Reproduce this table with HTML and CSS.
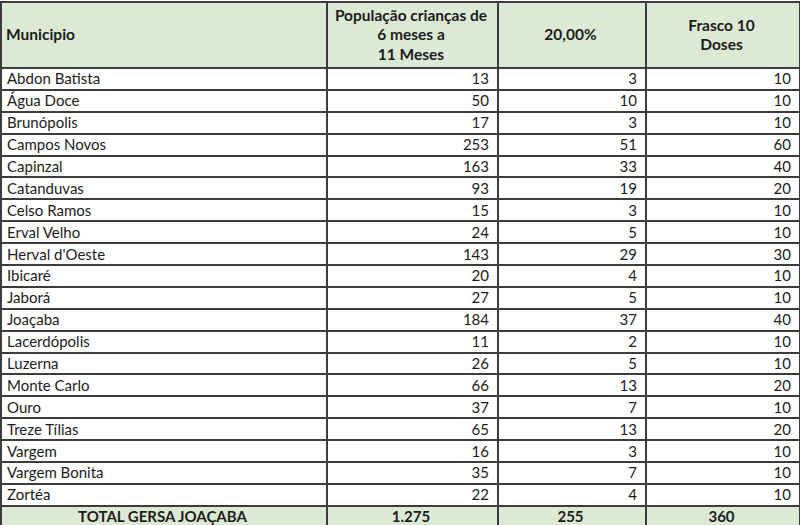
FILE: index.html
```html
<!DOCTYPE html>
<html lang="pt">
<head>
<meta charset="utf-8">
<title>Municipios</title>
<link rel="stylesheet" href="styles.css">
</head>
<body>
<table class="grid">
  <colgroup>
    <col class="c1"><col class="c2"><col class="c3"><col class="c4">
  </colgroup>
  <thead>
    <tr class="head">
      <th class="left">Municipio</th>
      <th>População crianças de<br>6 meses a<br>11 Meses</th>
      <th>20,00%</th>
      <th>Frasco 10<br>Doses</th>
    </tr>
  </thead>
  <tbody>
    <tr><td class="name">Abdon Batista</td><td>13</td><td>3</td><td>10</td></tr>
    <tr><td class="name">Água Doce</td><td>50</td><td>10</td><td>10</td></tr>
    <tr><td class="name">Brunópolis</td><td>17</td><td>3</td><td>10</td></tr>
    <tr><td class="name">Campos Novos</td><td>253</td><td>51</td><td>60</td></tr>
    <tr><td class="name">Capinzal</td><td>163</td><td>33</td><td>40</td></tr>
    <tr><td class="name">Catanduvas</td><td>93</td><td>19</td><td>20</td></tr>
    <tr><td class="name">Celso Ramos</td><td>15</td><td>3</td><td>10</td></tr>
    <tr><td class="name">Erval Velho</td><td>24</td><td>5</td><td>10</td></tr>
    <tr><td class="name">Herval d'Oeste</td><td>143</td><td>29</td><td>30</td></tr>
    <tr><td class="name">Ibicaré</td><td>20</td><td>4</td><td>10</td></tr>
    <tr><td class="name">Jaborá</td><td>27</td><td>5</td><td>10</td></tr>
    <tr><td class="name">Joaçaba</td><td>184</td><td>37</td><td>40</td></tr>
    <tr><td class="name">Lacerdópolis</td><td>11</td><td>2</td><td>10</td></tr>
    <tr><td class="name">Luzerna</td><td>26</td><td>5</td><td>10</td></tr>
    <tr><td class="name">Monte Carlo</td><td>66</td><td>13</td><td>20</td></tr>
    <tr><td class="name">Ouro</td><td>37</td><td>7</td><td>10</td></tr>
    <tr><td class="name">Treze Tílias</td><td>65</td><td>13</td><td>20</td></tr>
    <tr><td class="name">Vargem</td><td>16</td><td>3</td><td>10</td></tr>
    <tr><td class="name">Vargem Bonita</td><td>35</td><td>7</td><td>10</td></tr>
    <tr><td class="name">Zortéa</td><td>22</td><td>4</td><td>10</td></tr>
  </tbody>
  <tfoot>
    <tr class="total">
      <td>TOTAL GERSA JOAÇABA</td><td>1.275</td><td>255</td><td>360</td>
    </tr>
  </tfoot>
</table>
</body>
</html>
```

FILE: styles.css
```css
html, body {
  margin: 0;
  padding: 0;
  background: #ffffff;
}

body {
  padding-top: 1px;
  font-family: Lato, "Open Sans", sans-serif;
  color: #1c1c1c;
  overflow: hidden;
}

.grid {
  border-collapse: collapse;
  table-layout: fixed;
  width: 799px;
  font-size: 15px;
}

.c1 { width: 326px; }
.c2 { width: 171px; }
.c3 { width: 148px; }
.c4 { width: 154px; }

.grid th,
.grid td {
  border: 2px solid #3c3c3c;
  padding: 0 8px 0 5px;
  white-space: nowrap;
  overflow: hidden;
}

.head {
  height: 66px;
  background: #dcead5;
}

.head th {
  font-weight: 700;
  font-size: 15.5px;
  line-height: 19.5px;
  text-align: center;
  vertical-align: middle;
}

.head th.left {
  text-align: left;
  padding-left: 4px;
}

tbody tr {
  height: 21.9px;
}

tbody td {
  line-height: 17px;
  text-align: right;
  padding-right: 8px;
}

tbody td.name {
  text-align: left;
  padding-left: 5px;
}

.total {
  height: 22px;
  background: #dcead5;
}

.total td {
  font-weight: 700;
  text-align: center;
  line-height: 17px;
  padding-top: 0;
  padding-bottom: 1px;
}
```
